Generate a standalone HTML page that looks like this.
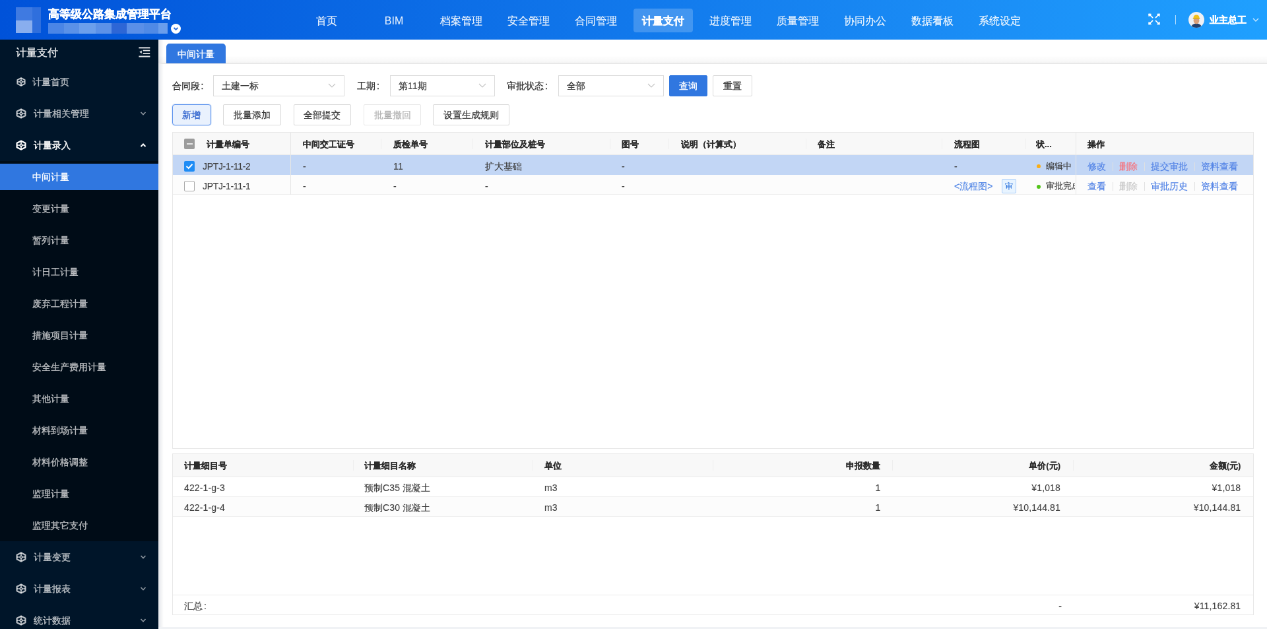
<!DOCTYPE html>
<html><head><meta charset="utf-8">
<style>
*{box-sizing:border-box;margin:0;padding:0}
html,body{width:1267px;height:629px;overflow:hidden;background:#f0f2f5}
body{font-family:"Liberation Sans",sans-serif;}
#root{position:absolute;left:0;top:0;width:1920px;height:953px;transform:scale(0.659896,0.66002);will-change:transform;-webkit-text-stroke:0.3px currentColor;transform-origin:0 0;overflow:hidden;background:#f0f2f5;color:rgba(0,0,0,.85);font-size:14px}
.abs{position:absolute}
/* header */
#hdr{position:absolute;left:0;top:0;width:1920px;height:60px;background:linear-gradient(90deg,#0052d9 0%,#1a8cf5 75%,#1fa0ff 100%)}
.nav{position:absolute;top:12.5px;width:90px;height:36px;line-height:38px;text-align:center;color:rgba(255,255,255,.92);font-size:16px;border-radius:4px;-webkit-text-stroke:0.15px currentColor}
.nav.on{background:rgba(255,255,255,.2);font-weight:bold;color:#fff;-webkit-text-stroke:0.1px currentColor}
/* sidebar */
#side{position:absolute;left:0;top:60px;width:240px;height:893px;background:#001529}
.mi{position:absolute;left:0;width:240px;height:40px;line-height:40px;color:rgba(255,255,255,.65);font-size:14px}
.mi .t{position:absolute;left:49px;top:0}
.mi svg.ic{position:absolute;left:24px;top:12px}
.mi svg.ar{position:absolute;left:212px;top:16px}
.si{position:absolute;left:0;width:240px;height:40px;line-height:40px;color:rgba(255,255,255,.65);font-size:14px;padding-left:49px}
.si.on{background:#3077e0;color:#fff}
/* content */
#content{position:absolute;left:240px;top:60px;width:1680px;height:889.5px;background:#fff}
.btn{position:absolute;height:32px;line-height:31px;border:1px solid #d9d9d9;background:#fff;text-align:center;font-size:14px;color:rgba(0,0,0,.72);border-radius:2px}
.sel{position:absolute;height:32px;line-height:31px;border:1px solid #dcdcdc;background:#fff;font-size:14px;padding-left:12px;color:rgba(0,0,0,.72)}
.sel svg{position:absolute;right:12px;top:11px}
.lbl{position:absolute;height:32px;line-height:32px;font-size:14px;color:rgba(0,0,0,.78)}
table{border-collapse:collapse;table-layout:fixed}
.tb{position:absolute;border:1px solid #e8e8e8;background:#fff}
.cell{position:absolute;white-space:nowrap;overflow:hidden}
.hsep{position:absolute;width:1px;height:16px;background:#eeeeee;margin-top:2.5px}
.lat{font-size:14px;letter-spacing:0.15px;-webkit-text-stroke:0.1px currentColor}
.lat.n{letter-spacing:-0.32px}
.link{color:#5283e6}
.vd{display:inline-block;width:1px;height:13px;background:#e0e0e0;vertical-align:-2px;margin:0 9.5px}
</style></head>
<body>
<div id="root">
<!-- HEADER -->
<div id="hdr">
  <!-- logo mosaic -->
  <div class="abs" style="left:24px;top:11px;width:24.5px;height:20px;background:#3f7ae1"></div>
  <div class="abs" style="left:24px;top:31px;width:24.5px;height:19px;background:#89aeee"></div>
  <div class="abs" style="left:48.5px;top:11px;width:13.5px;height:39px;background:#2f6fdd"></div>
  <div class="abs" style="left:72.5px;top:9.8px;height:24px;line-height:24px;font-size:17px;font-weight:bold;color:#fff;-webkit-text-stroke:0.45px currentColor;white-space:nowrap">高等级公路集成管理平台</div>
  <!-- subtitle mosaic -->
  <div class="abs" style="left:73px;top:35px;width:181px;height:16px;background:linear-gradient(90deg,#4a85e6 0,#4a85e6 13%,#5a91e8 13%,#5a91e8 26%,#6c9fec 26%,#6c9fec 40%,#5c91e8 40%,#5c91e8 53%,#2d66d6 53%,#2d66d6 66%,#5a8fe8 66%,#5a8fe8 80%,#508ae6 80%,#508ae6 92%,#6a9eec 92%)"></div>
  <svg class="abs" style="left:259px;top:36px" width="15" height="15" viewBox="0 0 15 15"><circle cx="7.5" cy="7.5" r="7.5" fill="#fff"/><polyline points="4.5,6 7.5,9 10.5,6" fill="none" stroke="#2f6fdd" stroke-width="1.8"/></svg>

  <div class="nav" style="left:450px">首页</div>
  <div class="nav" style="left:552px"><span style="-webkit-text-stroke:0">BIM</span></div>
  <div class="nav" style="left:654px">档案管理</div>
  <div class="nav" style="left:756px">安全管理</div>
  <div class="nav" style="left:858px">合同管理</div>
  <div class="nav on" style="left:960px">计量支付</div>
  <div class="nav" style="left:1062px">进度管理</div>
  <div class="nav" style="left:1164px">质量管理</div>
  <div class="nav" style="left:1266px">协同办公</div>
  <div class="nav" style="left:1368px">数据看板</div>
  <div class="nav" style="left:1470px">系统设定</div>

  <!-- fullscreen icon -->
  <svg class="abs" style="left:1740px;top:19.5px" width="18" height="18" viewBox="0 0 18 18" fill="#fff" stroke="#fff" stroke-linecap="round">
    <path d="M1 1 L4.6 1.3 L1.3 4.6 Z" stroke-width="1"/><path d="M2.2 2.2 L6.6 6.6" stroke-width="1.6"/>
    <path d="M17 1 L13.4 1.3 L16.7 4.6 Z" stroke-width="1"/><path d="M15.8 2.2 L11.4 6.6" stroke-width="1.6"/>
    <path d="M1 17 L4.6 16.7 L1.3 13.4 Z" stroke-width="1"/><path d="M2.2 15.8 L6.6 11.4" stroke-width="1.6"/>
    <path d="M17 17 L13.4 16.7 L16.7 13.4 Z" stroke-width="1"/><path d="M15.8 15.8 L11.4 11.4" stroke-width="1.6"/>
  </svg>
  <div class="abs" style="left:1780.5px;top:23px;width:1.5px;height:14px;background:rgba(255,255,255,.7)"></div>
  <!-- avatar -->
  <svg class="abs" style="left:1801px;top:18px" width="24" height="24" viewBox="0 0 24 24">
    <defs><clipPath id="cp"><circle cx="12" cy="12" r="12"/></clipPath></defs>
    <circle cx="12" cy="12" r="12" fill="#eef1f5"/>
    <g clip-path="url(#cp)">
      <path d="M3 26 Q4 17.5 12 17.5 Q20 17.5 21 26 Z" fill="#23406e"/>
      <ellipse cx="12" cy="13" rx="4.4" ry="5.2" fill="#d9a07a"/>
      <path d="M7.3 9.8 Q7.6 4.6 12 4.6 Q16.4 4.6 16.7 9.8 Z" fill="#f2c01a"/>
      <rect x="6.6" y="9.2" width="10.8" height="1.5" rx=".7" fill="#dcae12"/>
    </g>
  </svg>
  <div class="abs" style="left:1833px;top:18px;height:24px;line-height:24px;font-size:14px;font-weight:bold;color:#fff;white-space:nowrap;-webkit-text-stroke:0.4px currentColor">业主总工</div>
  <svg class="abs" style="left:1898px;top:27px" width="10" height="7" viewBox="0 0 10 7"><polyline points="1,1 5,5 9,1" fill="none" stroke="rgba(255,255,255,.75)" stroke-width="1.4"/></svg>
</div>

<!-- SIDEBAR -->
<div id="side">
  <div class="abs" style="left:24px;top:8px;height:24px;line-height:24px;font-size:16px;color:rgba(255,255,255,.9)">计量支付</div>
  <svg class="abs" style="left:210px;top:10px" width="18" height="18" viewBox="0 0 18 18" fill="rgba(255,255,255,.88)">
    <rect x="0.4" y="1.4" width="17" height="2"/>
    <rect x="6.7" y="5.7" width="10.5" height="1.8"/>
    <rect x="6.7" y="10.1" width="10.5" height="1.8"/>
    <rect x="0.4" y="14.6" width="17" height="2"/>
    <path d="M1.3 8.8 L4.8 6.6 L4.8 11 Z"/>
  </svg>
</div>
<div id="sidemenu" class="abs" style="left:0;top:0;width:240px;height:953px">
  <!-- top-level -->
  <div class="mi" style="top:104px"><svg class="ic" width="16" height="16" viewBox="0 0 16 16"><use href="#hex"/></svg><span class="t">计量首页</span></div>
  <div class="mi" style="top:152px"><svg class="ic" width="16" height="16" viewBox="0 0 16 16"><use href="#hexb"/></svg><span class="t" style="left:51px">计量相关管理</span><svg class="ar" width="10" height="8" viewBox="0 0 10 8"><polyline points="1.5,2 5,5.5 8.5,2" fill="none" stroke="rgba(255,255,255,.55)" stroke-width="1.6"/></svg></div>
  <div class="mi" style="top:200px;color:#fff;-webkit-text-stroke:0.45px #fff"><svg class="ic" width="16" height="16" viewBox="0 0 16 16"><use href="#hexbw"/></svg><span class="t" style="left:51px">计量录入</span><svg class="ar" width="10" height="8" viewBox="0 0 10 8"><polyline points="1.5,6 5,2.5 8.5,6" fill="none" stroke="#fff" stroke-width="2"/></svg></div>
  <div class="abs" style="left:0;top:244px;width:240px;height:576px;background:#000c17"></div>
  <div class="si on" style="top:248px">中间计量</div>
  <div class="si" style="top:296px">变更计量</div>
  <div class="si" style="top:344px">暂列计量</div>
  <div class="si" style="top:392px">计日工计量</div>
  <div class="si" style="top:440px">废弃工程计量</div>
  <div class="si" style="top:488px">措施项目计量</div>
  <div class="si" style="top:536px">安全生产费用计量</div>
  <div class="si" style="top:584px">其他计量</div>
  <div class="si" style="top:632px">材料到场计量</div>
  <div class="si" style="top:680px">材料价格调整</div>
  <div class="si" style="top:728px">监理计量</div>
  <div class="si" style="top:776px">监理其它支付</div>
  <div class="mi" style="top:824px"><svg class="ic" width="16" height="16" viewBox="0 0 16 16"><use href="#hexb"/></svg><span class="t" style="left:51px">计量变更</span><svg class="ar" width="10" height="8" viewBox="0 0 10 8"><polyline points="1.5,2 5,5.5 8.5,2" fill="none" stroke="rgba(255,255,255,.55)" stroke-width="1.6"/></svg></div>
  <div class="mi" style="top:872px"><svg class="ic" width="16" height="16" viewBox="0 0 16 16"><use href="#hexb"/></svg><span class="t" style="left:51px">计量报表</span><svg class="ar" width="10" height="8" viewBox="0 0 10 8"><polyline points="1.5,2 5,5.5 8.5,2" fill="none" stroke="rgba(255,255,255,.55)" stroke-width="1.6"/></svg></div>
  <div class="mi" style="top:920px"><svg class="ic" width="16" height="16" viewBox="0 0 16 16"><use href="#hexb"/></svg><span class="t" style="left:51px">统计数据</span><svg class="ar" width="10" height="8" viewBox="0 0 10 8"><polyline points="1.5,2 5,5.5 8.5,2" fill="none" stroke="rgba(255,255,255,.55)" stroke-width="1.6"/></svg></div>
</div>
<svg width="0" height="0" style="position:absolute">
  <defs>
    <g id="hex" fill="none" stroke="rgba(255,255,255,.72)">
      <path d="M8 2.10 L13.60 5.05 L13.60 10.95 L8 13.90 L2.40 10.95 L2.40 5.05 Z" stroke-linejoin="round" stroke-width="2.0"/>
      <circle cx="8" cy="8" r="1.7" stroke-width="1.6"/>
      <path d="M2.40 8 H6.3 M9.7 8 H13.60 M8 2.10 V6.3 M8 9.7 V13.90" stroke-width="1.7"/>
    </g>
    <g id="hexw" fill="none" stroke="#fff">
      <path d="M8 2.10 L13.60 5.05 L13.60 10.95 L8 13.90 L2.40 10.95 L2.40 5.05 Z" stroke-linejoin="round" stroke-width="2.0"/>
      <circle cx="8" cy="8" r="1.7" stroke-width="1.6"/>
      <path d="M2.40 8 H6.3 M9.7 8 H13.60 M8 2.10 V6.3 M8 9.7 V13.90" stroke-width="1.7"/>
    </g>
    <g id="hexb" fill="none" stroke="rgba(255,255,255,.72)">
      <path d="M8 1.40 L14.40 4.70 L14.40 11.30 L8 14.60 L1.60 11.30 L1.60 4.70 Z" stroke-linejoin="round" stroke-width="2.2"/>
      <circle cx="8" cy="8" r="1.7" stroke-width="1.6"/>
      <path d="M1.60 8 H6.3 M9.7 8 H14.40 M8 1.40 V6.3 M8 9.7 V14.60" stroke-width="1.7"/>
    </g>
    <g id="hexbw" fill="none" stroke="#fff">
      <path d="M8 1.40 L14.40 4.70 L14.40 11.30 L8 14.60 L1.60 11.30 L1.60 4.70 Z" stroke-linejoin="round" stroke-width="2.2"/>
      <circle cx="8" cy="8" r="1.7" stroke-width="1.6"/>
      <path d="M1.60 8 H6.3 M9.7 8 H14.40 M8 1.40 V6.3 M8 9.7 V14.60" stroke-width="1.7"/>
    </g>
    </defs>
</svg>

<!-- CONTENT -->
<div id="content">
  <div class="abs" style="left:0;top:0;width:8px;height:889.5px;background:linear-gradient(90deg,#e4e6ea,#fff)"></div>
  <!-- tab bar -->
  <div class="abs" style="left:0;top:24px;width:1680px;height:11px;background:linear-gradient(180deg,rgba(0,0,0,0),rgba(0,0,0,.035))"></div>
  <div class="abs" style="left:0;top:35px;width:1680px;height:1.5px;background:#e8e8e8"></div>
  <div class="abs" style="left:11.7px;top:5.8px;width:90.5px;height:30px;line-height:32px;background:#3077e0;color:#fff;text-align:center;border-radius:5px 5px 0 0;font-size:14px">中间计量</div>
</div>
<div id="main" class="abs" style="left:0;top:0;width:1920px;height:953px">
  <!-- filter -->
  <div class="lbl" style="left:260.5px;top:114px">合同段<span style="margin-left:2px">:</span></div>
  <div class="sel" style="left:323px;top:114px;width:199px">土建一标<svg width="12" height="8" viewBox="0 0 12 8"><polyline points="1,1 6,6 11,1" fill="none" stroke="#c4c4c4" stroke-width="1.1"/></svg></div>
  <div class="lbl" style="left:541px;top:114px">工期<span style="margin-left:2px">:</span></div>
  <div class="sel" style="left:591px;top:114px;width:159px">第<span class="lat">11</span>期<svg width="12" height="8" viewBox="0 0 12 8"><polyline points="1,1 6,6 11,1" fill="none" stroke="#c4c4c4" stroke-width="1.1"/></svg></div>
  <div class="lbl" style="left:768px;top:114px">审批状态<span style="margin-left:2px">:</span></div>
  <div class="sel" style="left:845.5px;top:114px;width:160px">全部<svg width="12" height="8" viewBox="0 0 12 8"><polyline points="1,1 6,6 11,1" fill="none" stroke="#c4c4c4" stroke-width="1.1"/></svg></div>
  <div class="btn" style="left:1014px;top:114px;width:58px;background:#3077e0;border-color:#3077e0;color:#fff">查询</div>
  <div class="btn" style="left:1080px;top:114px;width:60px">重置</div>
  <!-- buttons -->
  <div class="btn" style="left:260.5px;top:158px;width:59px;background:#e9f1fd;border-color:#5d93ee;color:#2a5fcc;border-radius:4px;box-shadow:0 0 0 1px rgba(48,119,224,.15)">新增</div>
  <div class="btn" style="left:337.5px;top:158px;width:88px">批量添加</div>
  <div class="btn" style="left:444.5px;top:158px;width:87px">全部提交</div>
  <div class="btn" style="left:551px;top:158px;width:87px;color:rgba(0,0,0,.25);border-color:#e8e8e8">批量撤回</div>
  <div class="btn" style="left:656px;top:158px;width:116px">设置生成规则</div>

  <!-- TABLE 1 -->
  <div class="tb" style="left:260.5px;top:200px;width:1639px;height:480px"></div>
  <div class="abs" style="left:261.5px;top:201px;width:1637px;height:34px;background:#f8f8f8;border-bottom:1px solid #ebebeb"></div>
  <div class="abs" style="left:261.5px;top:235px;width:1637px;height:30px;background:#c2d6f5"></div>
  <div class="abs" style="left:261.5px;top:265px;width:1637px;height:29.5px;background:#fcfcfc;border-bottom:1px solid #eeeeee"></div>
  <!-- fixed borders -->
  <div class="abs" style="left:440px;top:201px;width:1px;height:93.5px;background:#e6e6e6"></div>
  <div class="abs" style="left:1629.5px;top:201px;width:1px;height:93.5px;background:#e6e6e6"></div>
  <!-- header separators -->
  <div class="hsep" style="left:576.5px;top:207px"></div>
  <div class="hsep" style="left:716.4px;top:207px"></div>
  <div class="hsep" style="left:924px;top:207px"></div>
  <div class="hsep" style="left:1013.3px;top:207px"></div>
  <div class="hsep" style="left:1221.2px;top:207px"></div>
  <div class="hsep" style="left:1427.3px;top:207px"></div>
  <div class="hsep" style="left:1553px;top:207px"></div>
  <!-- header checkbox -->
  <div class="abs" style="left:279px;top:209.5px;width:16px;height:16px;background:#9c9c9c;border-radius:2px"></div>
  <div class="abs" style="left:282.5px;top:216.5px;width:9px;height:2px;background:#e8e8e8"></div>
  <div id="thead" style="font-size:13px;font-weight:bold;color:#2b2b2b;-webkit-text-stroke:0.15px currentColor">
    <div class="cell" style="left:313px;top:208.3px;line-height:22px">计量单编号</div>
    <div class="cell" style="left:459px;top:208.3px;line-height:22px">中间交工证号</div>
    <div class="cell" style="left:596px;top:208.3px;line-height:22px">质检单号</div>
    <div class="cell" style="left:735px;top:208.3px;line-height:22px">计量部位及桩号</div>
    <div class="cell" style="left:942px;top:208.3px;line-height:22px">图号</div>
    <div class="cell" style="left:1032px;top:208.3px;line-height:22px">说明（计算式）</div>
    <div class="cell" style="left:1239px;top:208.3px;line-height:22px">备注</div>
    <div class="cell" style="left:1446px;top:208.3px;line-height:22px">流程图</div>
    <div class="cell" style="left:1570px;top:208.3px;line-height:22px">状...</div>
    <div class="cell" style="left:1648px;top:208.3px;line-height:22px">操作</div>
  </div>
  <!-- row 1 -->
  <div class="abs" style="left:279px;top:244px;width:16px;height:16px;background:#1e8cf5;border-radius:2px"></div>
  <svg class="abs" style="left:279px;top:244px" width="16" height="16" viewBox="0 0 16 16"><polyline points="3.5,8 6.8,11 12.5,4.8" fill="none" stroke="#fff" stroke-width="2"/></svg>
  <div style="font-size:14px;color:#404040;-webkit-text-stroke:0.18px currentColor">
    <div class="cell" style="left:307px;top:240.8px;line-height:22px"><span class="lat n">JPTJ-1-11-2</span></div>
    <div class="cell" style="left:459px;top:240.8px;line-height:22px">-</div>
    <div class="cell" style="left:596px;top:240.8px;line-height:22px"><span class="lat">11</span></div>
    <div class="cell" style="left:735px;top:240.8px;line-height:22px">扩大基础</div>
    <div class="cell" style="left:942px;top:240.8px;line-height:22px">-</div>
    <div class="cell" style="left:1446px;top:240.8px;line-height:22px">-</div>
    <div class="abs" style="left:1571px;top:248.5px;width:6px;height:6px;border-radius:50%;background:#faad14"></div>
    <div class="cell" style="left:1585px;top:240.8px;line-height:22px;width:43px;font-size:13px">编辑中</div>
    <div class="cell" style="left:1648px;top:240.8px;line-height:22px"><span class="link">修改</span><span class="vd"></span><span style="color:#f7707a">删除</span><span class="vd"></span><span class="link">提交审批</span><span class="vd"></span><span class="link">资料查看</span></div>
  </div>
  <!-- row 2 -->
  <div class="abs" style="left:279px;top:274px;width:16px;height:16px;background:#fff;border:1.5px solid #a8a8a8;border-radius:2px"></div>
  <div style="font-size:14px;color:#404040;-webkit-text-stroke:0.18px currentColor">
    <div class="cell" style="left:307px;top:271.3px;line-height:22px"><span class="lat n">JPTJ-1-11-1</span></div>
    <div class="cell" style="left:459px;top:271.3px;line-height:22px">-</div>
    <div class="cell" style="left:596px;top:271.3px;line-height:22px">-</div>
    <div class="cell" style="left:735px;top:271.3px;line-height:22px">-</div>
    <div class="cell" style="left:942px;top:271.3px;line-height:22px">-</div>
    <div class="cell" style="left:1446px;top:271.3px;line-height:22px;color:#5588e6">&lt;流程图&gt;</div>
    <div class="abs" style="left:1518px;top:271px;width:22px;height:22px;line-height:20px;text-align:center;border:1px solid #a8cdfa;background:#e8f4ff;color:#3b7de0;font-size:12px;border-radius:2px">审</div>
    <div class="abs" style="left:1571px;top:279.5px;width:6px;height:6px;border-radius:50%;background:#52c41a"></div>
    <div class="cell" style="left:1585px;top:271.3px;line-height:22px;width:44px;font-size:13px">审批完成</div>
    <div class="cell" style="left:1648px;top:271.3px;line-height:22px"><span class="link">查看</span><span class="vd"></span><span style="color:#c8c8c8">删除</span><span class="vd"></span><span class="link">审批历史</span><span class="vd"></span><span class="link">资料查看</span></div>
  </div>

  <!-- TABLE 2 -->
  <div class="tb" style="left:260.5px;top:686.5px;width:1639px;height:245px"></div>
  <div class="abs" style="left:261.5px;top:687.5px;width:1637px;height:35px;background:#f8f8f8;border-bottom:1px solid #ebebeb"></div>
  <div class="abs" style="left:261.5px;top:722.5px;width:1637px;height:30px;background:#fff;border-bottom:1px solid #efefef"></div>
  <div class="abs" style="left:261.5px;top:752.5px;width:1637px;height:30px;background:#fcfcfc;border-bottom:1px solid #efefef"></div>
  <div class="abs" style="left:261.5px;top:900.5px;width:1637px;height:1.5px;background:#ebebeb"></div>
  <div class="hsep" style="left:534.8px;top:694px"></div>
  <div class="hsep" style="left:807px;top:694px"></div>
  <div class="hsep" style="left:1079.5px;top:694px"></div>
  <div class="hsep" style="left:1352.4px;top:694px"></div>
  <div class="hsep" style="left:1625.8px;top:694px"></div>
  <div style="font-size:13px;font-weight:bold;color:#2b2b2b;-webkit-text-stroke:0.15px currentColor">
    <div class="cell" style="left:279px;top:695.3px;line-height:22px">计量细目号</div>
    <div class="cell" style="left:552px;top:695.3px;line-height:22px">计量细目名称</div>
    <div class="cell" style="left:825px;top:695.3px;line-height:22px">单位</div>
    <div class="cell" style="right:585.6px;top:695.3px;line-height:22px">申报数量</div>
    <div class="cell" style="right:313px;top:695.3px;line-height:22px">单价(元)</div>
    <div class="cell" style="right:39.7px;top:695.3px;line-height:22px">金额(元)</div>
  </div>
  <div style="font-size:14px;color:#404040;-webkit-text-stroke:0.18px currentColor">
    <div class="cell" style="left:279px;top:727.8px;line-height:22px"><span class="lat">422-1-g-3</span></div>
    <div class="cell" style="left:552px;top:727.8px;line-height:22px">预制<span class="lat">C35 </span>混凝土</div>
    <div class="cell" style="left:825px;top:727.8px;line-height:22px"><span class="lat">m3</span></div>
    <div class="cell" style="right:585.6px;top:727.8px;line-height:22px">1</div>
    <div class="cell" style="right:313px;top:727.8px;line-height:22px"><span class="lat">¥1,018</span></div>
    <div class="cell" style="right:39.7px;top:727.8px;line-height:22px"><span class="lat">¥1,018</span></div>
    <div class="cell" style="left:279px;top:757.8px;line-height:22px"><span class="lat">422-1-g-4</span></div>
    <div class="cell" style="left:552px;top:757.8px;line-height:22px">预制<span class="lat">C30 </span>混凝土</div>
    <div class="cell" style="left:825px;top:757.8px;line-height:22px"><span class="lat">m3</span></div>
    <div class="cell" style="right:585.6px;top:757.8px;line-height:22px">1</div>
    <div class="cell" style="right:313px;top:757.8px;line-height:22px"><span class="lat">¥10,144.81</span></div>
    <div class="cell" style="right:39.7px;top:757.8px;line-height:22px"><span class="lat">¥10,144.81</span></div>
    <div class="cell" style="left:279px;top:906.5px;line-height:22px">汇总<span style="margin-left:2px">:</span></div>
    <div class="cell" style="right:311px;top:906.5px;line-height:22px">-</div>
    <div class="cell" style="right:39.7px;top:906.5px;line-height:22px"><span class="lat">¥11,162.81</span></div>
  </div>
</div>
</div>
</body></html>
